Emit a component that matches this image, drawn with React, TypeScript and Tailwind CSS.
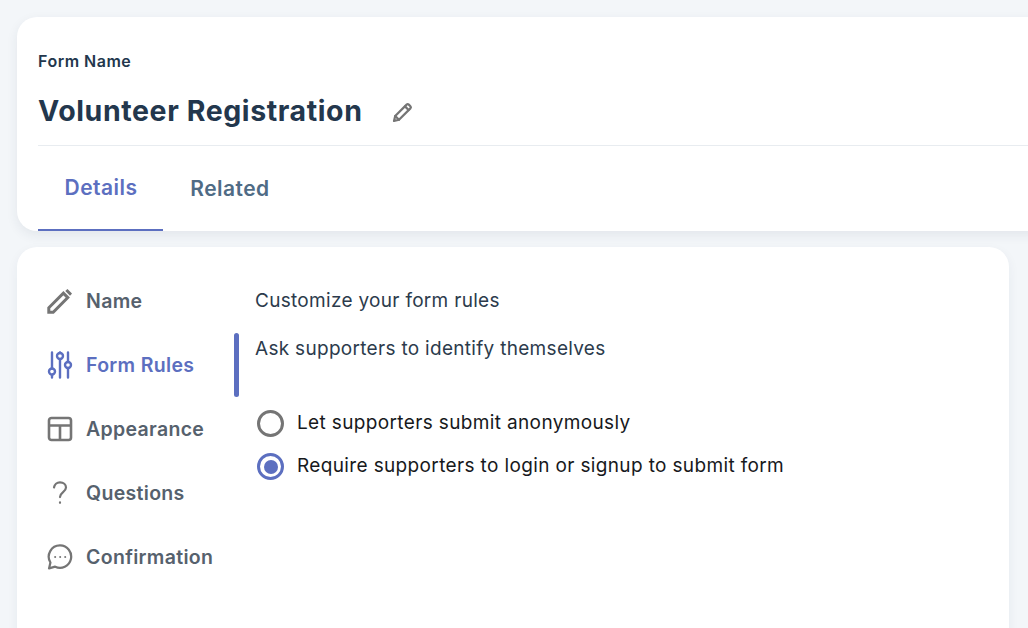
import React from 'react';

const PencilOutline = () => (
  <svg width="22" height="22" viewBox="0 0 22 22" fill="none" stroke="#757575" strokeWidth="2.2" strokeLinejoin="round" strokeLinecap="round">
    <path d="M2 20l1.2-5L14.6 3.6a1.6 1.6 0 0 1 2.2 0l1.6 1.6a1.6 1.6 0 0 1 0 2.2L7 18.8 2 20z" />
    <path d="M13 5.4l3.6 3.6" />
    <path d="M3.2 15l3.8 3.8" />
  </svg>
);

const NameIcon = () => (
  <svg width="26" height="26" viewBox="0 0 26 26" fill="none">
    <path d="M1.8 24.2v-4.4L16.4 5.2l4.4 4.4L6.2 24.2H1.8z" stroke="#757575" strokeWidth="3" strokeLinejoin="miter" />
    <path d="M19.3 1.9l1.2-.9 4.5 4.5-1 1.2-1 1-4.7-4.7 1-1.1z" fill="#757575" />
  </svg>
);

const RulesIcon = () => (
  <svg width="26" height="28" viewBox="0 0 26 28" fill="none" stroke="#5c6fc0" strokeWidth="2.4" strokeLinecap="round">
    <path d="M5 1.5v16M5 24v2.5" />
    <circle cx="5" cy="20.5" r="3" />
    <path d="M13 8.5v18M13 1.5v.5" />
    <circle cx="13" cy="5" r="3" />
    <path d="M21 1.5v9.5M21 17.5v9" />
    <circle cx="21" cy="14" r="3" />
  </svg>
);

const LayoutIcon = () => (
  <svg width="26" height="26" viewBox="0 0 26 26" fill="none" stroke="#757575" strokeWidth="2.6">
    <rect x="2" y="2" width="22" height="22" rx="2.5" />
    <path d="M2 9.5h22M13 9.5V24" />
  </svg>
);

const QuestionIcon = () => (
  <svg width="26" height="26" viewBox="0 0 26 26" fill="none" stroke="#757575" strokeWidth="2.2" strokeLinecap="round">
    <path d="M7 7.5a6 6 0 0 1 6-5.2c3.4 0 6 2.2 6 5.2 0 4.6-6 4.6-6 9.6" />
    <path d="M13 22.4v.4" />
  </svg>
);

const BubbleIcon = () => (
  <svg width="28" height="28" viewBox="0 0 28 28" fill="none">
    <path d="M14.2 1.6a12 12 0 1 1-5.4 22.8l-6.6 1.9 1.5-6.4A12 12 0 0 1 14.2 1.6z" stroke="#757575" strokeWidth="2.4" strokeLinejoin="round" />
    <circle cx="8.8" cy="14" r="1.1" fill="#757575" />
    <circle cx="14.2" cy="14" r="1.1" fill="#757575" />
    <circle cx="19.6" cy="14" r="1.1" fill="#757575" />
  </svg>
);

const navItems = [
  { label: 'Name', icon: <NameIcon /> },
  { label: 'Form Rules', icon: <RulesIcon />, active: true },
  { label: 'Appearance', icon: <LayoutIcon /> },
  { label: 'Questions', icon: <QuestionIcon /> },
  { label: 'Confirmation', icon: <BubbleIcon /> },
];

const Radio = ({ checked, label }: { checked?: boolean; label: string }) => (
  <label className="flex items-center gap-[13px] h-[43px] text-[19px] tracking-[0.36px] text-[#17191c]">
    {checked ? (
      <span className="w-[27px] h-[27px] rounded-full border-[3px] border-[#5c6fc0] flex items-center justify-center">
        <span className="w-[14px] h-[14px] rounded-full bg-[#5c6fc0]" />
      </span>
    ) : (
      <span className="w-[27px] h-[27px] rounded-full border-[3px] border-[#757575]" />
    )}
    {label}
  </label>
);

export default function App() {
  return (
    <div className='h-[628px] w-[1028px] overflow-hidden bg-[#f3f6f9] pt-[17px] pl-[17px] font-["Inter","Liberation_Sans",sans-serif]'>
      <div className="w-[1040px] h-[214px] bg-white rounded-[20px] shadow-[0_4px_12px_rgba(35,55,77,0.08)] pl-[21px] flex flex-col">
        <div className="text-[16px] tracking-[0.5px] leading-[20px] font-semibold text-[#23374d] pt-[34px]">Form Name</div>
        <div className="flex items-center h-[44px] mt-[18px] gap-[29px]">
          <h1 className="text-[28.5px] tracking-[0.6px] leading-[44px] font-bold text-[#23374d]">Volunteer Registration</h1>
          <span className="mt-[2px]"><PencilOutline /></span>
        </div>
        <div className="border-t border-[#e8ecf0] mt-[12px] flex flex-1">
          <div className="w-[125px] pl-[1px] flex items-center justify-center border-b-2 border-[#5c6fc0] text-[21px] tracking-[0.45px] font-semibold text-[#5c6fc0]">Details</div>
          <div className="w-[134px] flex items-center justify-center text-[21px] tracking-[0.45px] font-semibold text-[#4f6b85]">Related</div>
        </div>
      </div>

      <div className="w-[992px] h-[500px] mt-[16px] bg-white rounded-[20px] shadow-[0_4px_12px_rgba(35,55,77,0.06)] flex">
        <nav className="w-[217px] pt-[22px] flex flex-col shrink-0 relative">
          {navItems.map(item => (
            <div key={item.label} className="relative h-[64px] flex items-center pl-[30px] gap-[13px]">
              <span className="w-[26px] flex justify-center">{item.icon}</span>
              <span className={`text-[19.5px] tracking-[0.32px] font-semibold pt-[2px] ${item.active ? 'text-[#5c6fc0]' : 'text-[#56616d]'}`}>{item.label}</span>
              {item.active && <span className="absolute right-[-5px] top-0 w-[5px] h-[64px] rounded-full bg-[#5c6fc0]" />}
            </div>
          ))}
        </nav>
        <div className="pl-[21px] pt-[40px]">
          <p className="text-[19px] tracking-[0.3px] leading-[28px] text-[#2c3b4c]">Customize your form rules</p>
          <p className="text-[19px] tracking-[0.3px] leading-[28px] text-[#2c3b4c] mt-[20px]">Ask supporters to identify themselves</p>
          <div className="mt-[39px] pl-[2px] flex flex-col">
            <Radio label="Let supporters submit anonymously" />
            <Radio checked label="Require supporters to login or signup to submit form" />
          </div>
        </div>
      </div>
    </div>
  );
}
